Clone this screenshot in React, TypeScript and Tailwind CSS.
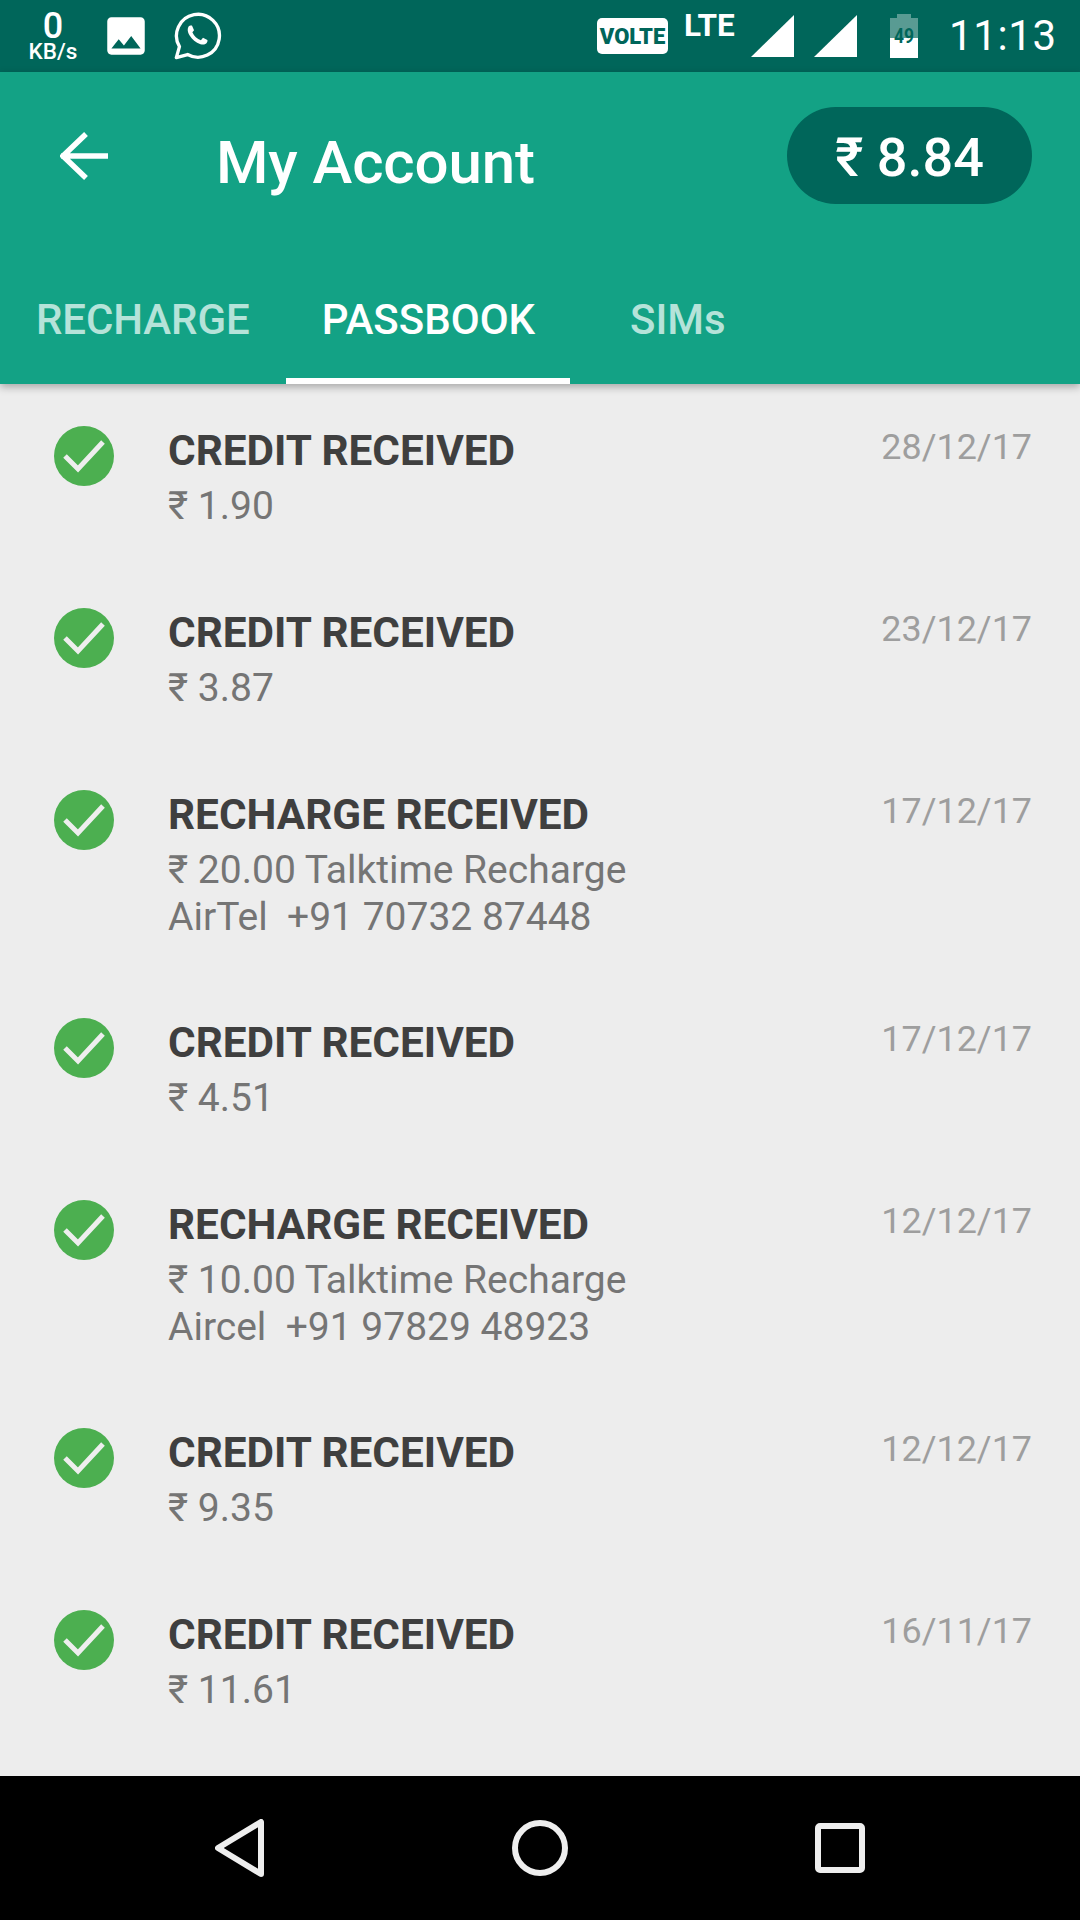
import React from "react";

const rows = [
  { t: "CREDIT RECEIVED", a: ["₹ 1.90"], d: "28/12/17" },
  { t: "CREDIT RECEIVED", a: ["₹ 3.87"], d: "23/12/17" },
  { t: "RECHARGE RECEIVED", a: ["₹ 20.00 Talktime Recharge", "AirTel  +91 70732 87448"], d: "17/12/17" },
  { t: "CREDIT RECEIVED", a: ["₹ 4.51"], d: "17/12/17" },
  { t: "RECHARGE RECEIVED", a: ["₹ 10.00 Talktime Recharge", "Aircel  +91 97829 48923"], d: "12/12/17" },
  { t: "CREDIT RECEIVED", a: ["₹ 9.35"], d: "12/12/17" },
  { t: "CREDIT RECEIVED", a: ["₹ 11.61"], d: "16/11/17" },
];

function Check() {
  return (
    <svg width="60" height="60" viewBox="0 0 60 60" className="shrink-0">
      <circle cx="30" cy="30" r="30" fill="#4caf50" />
      <path d="M11 30 L24 43 L49 16" fill="none" stroke="#eeeeee" strokeWidth="5" />
    </svg>
  );
}

function Row({ t, a, d }: { t: string; a: string[]; d: string }) {
  return (
    <div className={`flex items-start pl-[54px] pr-[48px] pt-[42px] ${a.length > 1 ? "h-[228px]" : "h-[182px]"}`}>
      <Check />
      <div className="ml-[54px] flex-1 mt-[2px]">
        <div className="text-[42.300px] leading-[46px] font-bold text-[#3f3f3f]">{t}</div>
        <div className="mt-[9px]">
          {a.map((l, i) => (
            <div key={i} className="text-[39px] leading-[46.500px] text-[#757575] whitespace-pre">{l}</div>
          ))}
        </div>
      </div>
      <div className="text-[35.900px] leading-[46px] -mt-[2px] text-[#9e9e9e]">{d}</div>
    </div>
  );
}

function StatusBar() {
  return (
    <div className="h-[72px] bg-[#00665a] flex items-center text-white relative shrink-0">
      <div className="w-[101px] pl-[5px] flex flex-col items-center font-medium">
        <div className="text-[36px] leading-[30px]">0</div>
        <div className="text-[22.500px] leading-[20px] whitespace-nowrap">KB/s</div>
      </div>
      <svg width="50" height="50" viewBox="0 0 24 24" fill="#fff">
        <path d="M21 19V5c0-1.100-.9-2-2-2H5c-1.100 0-2 .9-2 2v14c0 1.100.9 2 2 2h14c1.100 0 2-.9 2-2zM8.500 13.500l2.500 3.010L14.500 12l4.500 6H5l3.500-4.500z" />
      </svg>
      <svg width="50" height="50" viewBox="0 0 24 24" className="ml-[22px]" fill="none" stroke="#fff" strokeWidth="1.600">
        <path d="M1.600 22.400l1.500-5.300A10.300 10.300 0 1 1 7 20.900z" strokeLinejoin="round" />
        <path d="M8.700 6.900c-.5 0-1 .2-1.300.7-.6 1.200-.4 2.600.5 4 1.300 2 3 3.500 5.300 4.300 1.300.5 2.500.2 3.100-.8.3-.5.3-1 .2-1.200l-2.100-1.100-1 1.200c-1.800-.6-3.300-2-4.100-3.800l.8-1-1-2.300z" fill="#fff" stroke="none" />
      </svg>
      <div className="flex-1" />
      <div className="w-[71px] h-[36px] -ml-[1px] mr-[1px] bg-white rounded-[5px] flex items-center justify-center text-[#00665a] text-[22px] font-black">VOLTE</div>
      <div className="w-[52px] ml-[15px] -mt-[20px] text-[31.500px] leading-[30px] font-bold">LTE</div>
      <svg width="43" height="42" viewBox="0 0 43 42" className="ml-[15px]"><path d="M0 42L43 0V42z" fill="#fff" /></svg>
      <svg width="43" height="42" viewBox="0 0 43 42" className="ml-[20px]"><path d="M0 42L43 0V42z" fill="#fff" /></svg>
      <svg width="28" height="44" viewBox="0 0 28 44" className="ml-[33px]">
        <path d="M7 0h14v4h7v20H0V4h7z" fill="#fff" fillOpacity=".35" />
        <path d="M0 24h28v20H0z" fill="#fff" />
        <text x="14" y="29" textAnchor="middle" fontSize="20" fontWeight="700" fontFamily="Roboto" fill="#00665a" textLength="20" lengthAdjust="spacingAndGlyphs">49</text>
      </svg>
      <div className="ml-[31px] w-[105px] text-[42px] leading-[48px] tracking-[0.6px] mr-[26px]">11:13</div>
    </div>
  );
}

function Header() {
  return (
    <div className="bg-[#13a285] h-[312px] shrink-0 flex flex-col relative z-10 shadow-[0_3px_8px_rgba(0,0,0,0.3)] text-white">
      <div className="h-[192px] flex items-start">
        <svg width="48" height="48" viewBox="0 0 48 48" className="ml-[60px] mt-[60px]" fill="none" stroke="#fff" strokeWidth="5.500">
          <path d="M1 24H48M26 2L3 24L26 46" />
        </svg>
        <div className="ml-[108px] mt-[55px] text-[60px] leading-[72px] font-medium tracking-[-0.1px]">My Account</div>
        <div className="flex-1" />
        <div className="mt-[35px] mr-[48px] w-[245px] h-[97px] rounded-full bg-[#00665a] flex items-center justify-center text-[54px] font-medium pt-[4px]">₹ 8.84</div>
      </div>
      <div className="h-[120px] flex text-[42px] font-medium">
        <div className="w-[286px] pl-[36px] pt-[24px] text-[#b5e3d9] tracking-[-0.1px]">RECHARGE</div>
        <div className="w-[284px] h-[120px] pt-[24px] pl-[1px] text-center border-b-[6px] border-white">PASSBOOK</div>
        <div className="pl-[60px] pt-[24px] text-[#b5e3d9]">SIMs</div>
      </div>
    </div>
  );
}

function Nav() {
  return (
    <div className="h-[144px] bg-black shrink-0 flex items-center justify-center">
      <svg width="50" height="58" viewBox="0 0 50 58" className="mr-[247px]" fill="none" stroke="#eee" strokeWidth="6" strokeLinejoin="round">
        <path d="M46 3V55L3 29z" />
      </svg>
      <svg width="56" height="56" viewBox="0 0 56 56" fill="none" stroke="#eee" strokeWidth="6"><circle cx="28" cy="28" r="25" /></svg>
      <svg width="50" height="50" viewBox="0 0 50 50" className="ml-[247px]" fill="none" stroke="#eee" strokeWidth="6" strokeLinejoin="round"><rect x="3" y="3" width="44" height="44" rx="2" /></svg>
    </div>
  );
}

export default function App() {
  return (
    <div className="w-[1080px] h-[1920px] flex flex-col bg-[#ededed] overflow-hidden" style={{ fontFamily: "Roboto, 'Noto Sans', sans-serif" }}>
      <StatusBar />
      <Header />
      <div className="flex-1 overflow-hidden">
        {rows.map((r, i) => (
          <Row key={i} {...r} />
        ))}
      </div>
      <Nav />
    </div>
  );
}
